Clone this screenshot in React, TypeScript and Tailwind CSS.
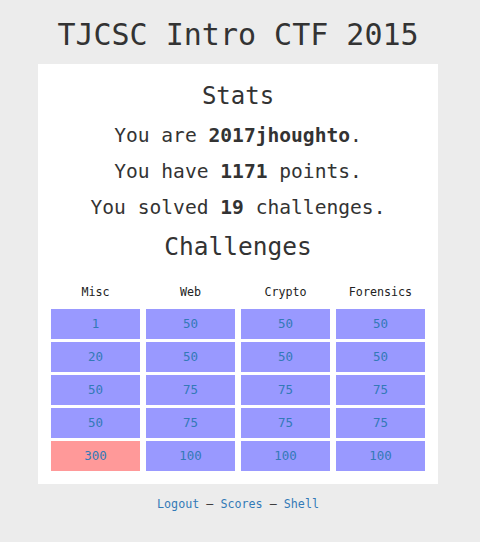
import React from "react";

const cols = [
  { name: "Misc", vals: [1, 20, 50, 50, 300], solved: [true, true, true, true, false] },
  { name: "Web", vals: [50, 50, 75, 75, 100], solved: [true, true, true, true, true] },
  { name: "Crypto", vals: [50, 50, 75, 75, 100], solved: [true, true, true, true, true] },
  { name: "Forensics", vals: [50, 50, 75, 75, 100], solved: [true, true, true, true, true] },
];

export default function App() {
  const font = { fontFamily: '"DejaVu Sans Mono", "Liberation Mono", monospace' };
  return (
    <div className="w-[480px] h-[542px] bg-[#ececec] text-[#333]" style={font}>
      <div className="w-[400px] ml-[38px]">
        <div className="h-[64px] flex items-center justify-center text-[30px] leading-none pt-[6px]">
          TJCSC Intro CTF 2015
        </div>
        <div className="bg-white pt-[10px] pb-[13px] px-[13px] flex flex-col items-center">
          <div className="text-[24px] leading-[44px]">Stats</div>
          <div className="text-[19.6px] leading-[36px]">
            You are <b>2017jhoughto</b>.
          </div>
          <div className="text-[19.6px] leading-[36px]">
            You have <b>1171</b> points.
          </div>
          <div className="text-[19.6px] leading-[36px]">
            You solved <b>19</b> challenges.
          </div>
          <div className="text-[24.5px] leading-[42px]">Challenges</div>
          <div className="mt-[8px] grid grid-cols-4 gap-x-[6px] gap-y-[3px] w-[374px]">
            {cols.map((c) => (
              <div key={c.name} className="h-[30px] pt-[4px] flex items-center justify-center text-[11.7px] text-[#222]">
                {c.name}
              </div>
            ))}
            {[0, 1, 2, 3, 4].map((r) =>
              cols.map((c) => (
                <div
                  key={c.name + r}
                  className={
                    "h-[30px] flex items-center justify-center text-[12.5px] text-[#337ab7] " +
                    (c.solved[r] ? "bg-[#9999ff]" : "bg-[#ff9999]")
                  }
                >
                  {c.vals[r]}
                </div>
              ))
            )}
          </div>
        </div>
        <div className="h-[38px] pt-[4px] flex items-center justify-center text-[11.7px]">
          <span className="text-[#337ab7]">Logout</span>
          <span className="text-[#333]">&nbsp;—&nbsp;</span>
          <span className="text-[#337ab7]">Scores</span>
          <span className="text-[#333]">&nbsp;—&nbsp;</span>
          <span className="text-[#337ab7]">Shell</span>
        </div>
      </div>
    </div>
  );
}
